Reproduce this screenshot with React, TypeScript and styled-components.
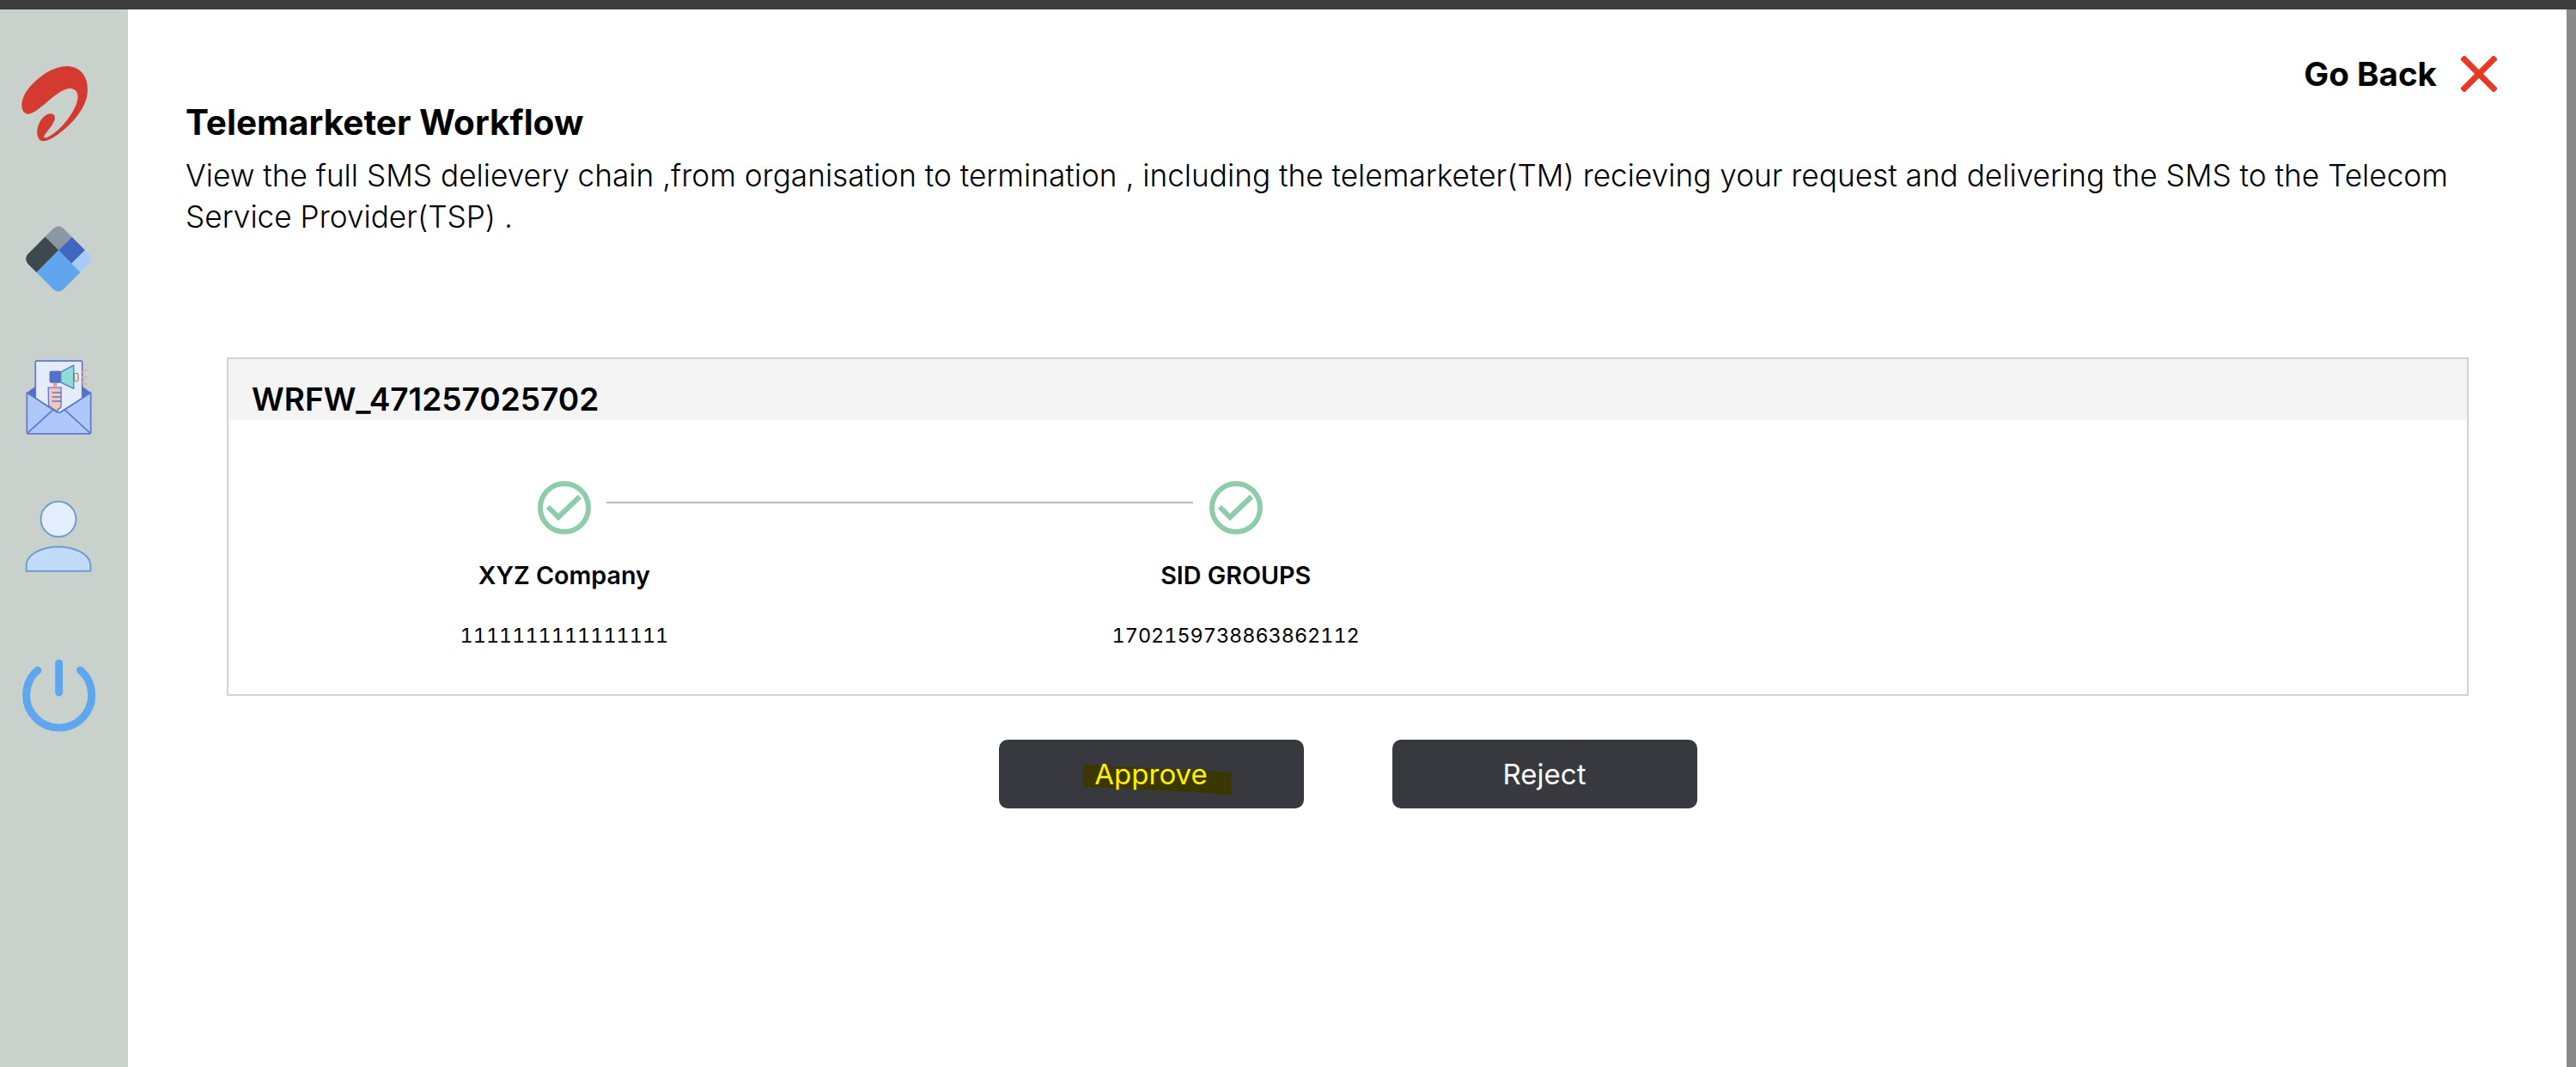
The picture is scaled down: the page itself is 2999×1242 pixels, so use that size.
import React from 'react';
import styled, { createGlobalStyle } from 'styled-components';

const GlobalStyle = createGlobalStyle`
  html, body {
    margin: 0;
    padding: 0;
    background: #ffffff;
    font-family: Inter, "Noto Sans", "Liberation Sans", sans-serif;
    color: #000000;
  }
`;

const AirtelLogo = () => (
  <svg width="87" height="88" viewBox="74 232 261 264">
    <path
      fill="#d43a2f"
      d="M75 365C78 325 115 285 160 255C190 238 225 228 250 234C285 242 305 270 305 315C305 360 275 405 235 443C205 470 175 492 152 494C132 495 124 470 131 445C138 420 155 400 175 398C188 398 195 408 188 424C180 442 165 458 153 475C150 482 156 484 165 480C200 464 250 410 267 360C276 330 268 312 245 310C218 310 190 335 160 360C135 380 115 398 97 399C83 399 74 385 75 365Z"
    />
  </svg>
);

const DiamondLogo = () => (
  <svg width="76" height="77" viewBox="90 790 228 231">
    <defs>
      <clipPath id="diamond-clip">
        <rect x="116.5" y="817.5" width="175" height="175" rx="24" transform="rotate(45 204 905)" />
      </clipPath>
    </defs>
    <g clipPath="url(#diamond-clip)">
      <polygon fill="#8a98a3" points="205,875 100,770 205,700 310,770" />
      <polygon fill="#3e494f" points="205,875 100,770 0,905 70,1010" />
      <polygon fill="#60a6ee" points="205,875 70,1010 205,1100 340,1010" />
      <polygon fill="#4166bf" points="205,875 310,770 345,827 250,921" />
      <polygon fill="#a6cbf7" points="250,921 345,827 400,900 340,1010" />
    </g>
  </svg>
);

const MailIcon = () => (
  <svg width="77" height="88" viewBox="88 206 232 264">
    <path fill="#5470c8" d="M92 320L122 298H286L316 320L204 390Z" />
    <path fill="#e4ecfc" stroke="#5c78d0" strokeWidth="5" strokeLinejoin="round" d="M122 212a3 3 0 0 1 3-3H283a3 3 0 0 1 3 3V340L204 392L122 340Z" />
    <path fill="#aec8f9" stroke="#5c78d0" strokeWidth="5" strokeLinejoin="round" d="M92 320L196 388Q204 392 212 388L316 320V460a4 4 0 0 1-4 4H96a4 4 0 0 1-4-4Z" />
    <path fill="none" stroke="#5c78d0" strokeWidth="5" d="M94 462L184 380M314 462L224 380" />
    <path fill="#f3c8bc" stroke="#5c78d0" strokeWidth="4" d="M167 302H212V365Q212 375 200 378V388L168 365Z" />
    <path fill="none" stroke="#5c78d0" strokeWidth="4" d="M180 320H212M180 335H212M180 350H212" />
    <rect x="184" y="286" width="14" height="16" fill="#e9a68f" />
    <rect x="171" y="244" width="42" height="42" rx="7" fill="#5470c8" />
    <path fill="#8fdcd8" stroke="#5c78d0" strokeWidth="4" strokeLinejoin="round" d="M211 248L256 224V306L211 284Z" />
    <rect x="258" y="252" width="14" height="28" rx="3" fill="#f9e88e" stroke="#5c78d0" strokeWidth="3" />
    <path fill="none" stroke="#f0a79d" strokeWidth="5" strokeLinecap="round" d="M284 248L301 241M284 266H302M284 283L301 291" />
  </svg>
);

const UserIcon = () => (
  <svg width="78" height="85" viewBox="86 696 236 254">
    <circle cx="204" cy="762" r="62" fill="#e3efff" stroke="#6f9bd2" strokeWidth="6" />
    <path fill="#c1dcfb" stroke="#6f9bd2" strokeWidth="6" d="M91 945V920C96 885 145 859 204 859C263 859 312 885 317 920V945Z" />
  </svg>
);

const PowerIcon = () => (
  <svg width="87" height="86" viewBox="73 140 261 260">
    <path
      fill="none"
      stroke="#60a6ee"
      strokeWidth="27"
      strokeLinecap="round"
      d="M129 180A115 115 0 1 0 279 180M204 155V258"
    />
  </svg>
);

const CloseIcon = () => (
  <svg width="42" height="42" viewBox="0 0 42 42">
    <path fill="none" stroke="#e63a26" strokeWidth="7" d="M1.5 1.5L40.5 40.5M40.5 1.5L1.5 40.5" />
  </svg>
);

const CheckCircle = () => (
  <svg width="62" height="62" viewBox="0 0 62 62">
    <circle cx="31" cy="31" r="28" fill="none" stroke="#8fcdaa" strokeWidth="6" />
    <path fill="none" stroke="#8fcdaa" strokeWidth="6" d="M12 30L24 42L49 18" />
  </svg>
);

const steps = [
  { name: 'XYZ Company', code: '1111111111111111' },
  { name: 'SID GROUPS', code: '1702159738863862112' },
];

const App = () => {
  return (
    <StyledRoot>
      <GlobalStyle />
      <StyledTopBar />
      <StyledShell>
        <StyledSidebar>
          <StyledNavItem $gap={66}><AirtelLogo /></StyledNavItem>
          <StyledNavItem $gap={98}><DiamondLogo /></StyledNavItem>
          <StyledNavItem $gap={79}><MailIcon /></StyledNavItem>
          <StyledNavItem $gap={75}><UserIcon /></StyledNavItem>
          <StyledNavItem $gap={100}><PowerIcon /></StyledNavItem>
        </StyledSidebar>
        <StyledMain>
          <StyledBackRow>
            <StyledBackText>Go Back</StyledBackText>
            <CloseIcon />
          </StyledBackRow>
          <StyledTitle>Telemarketer Workflow</StyledTitle>
          <StyledDescription>
            View the full SMS delievery chain ,from organisation to termination , including the telemarketer(TM) recieving your request and delivering the SMS to the Telecom Service Provider(TSP) .
          </StyledDescription>
          <StyledCard>
            <StyledCardHeader>WRFW_471257025702</StyledCardHeader>
            <StyledStepper>
              {steps.map((step, index) => (
                <StyledStep key={step.code} $connected={index > 0}>
                  <CheckCircle />
                  <StyledStepName>{step.name}</StyledStepName>
                  <StyledStepCode>{step.code}</StyledStepCode>
                </StyledStep>
              ))}
            </StyledStepper>
          </StyledCard>
          <StyledActions>
            <StyledButton $highlighted>
              <StyledMarker />
              <StyledButtonLabel>Approve</StyledButtonLabel>
            </StyledButton>
            <StyledButton>
              <StyledButtonLabel>Reject</StyledButtonLabel>
            </StyledButton>
          </StyledActions>
        </StyledMain>
        <StyledScrollbar />
      </StyledShell>
    </StyledRoot>
  );
};

const StyledRoot = styled.div`
  display: flex;
  flex-direction: column;
  width: 2999px;
  height: 1242px;
  overflow: hidden;
`;
const StyledTopBar = styled.div`
  flex: none;
  height: 11px;
  background: #3c3c3c;
`;
const StyledShell = styled.div`
  flex: 1;
  display: flex;
  min-height: 0;
`;
const StyledSidebar = styled.nav`
  flex: none;
  display: flex;
  flex-direction: column;
  align-items: center;
  box-sizing: border-box;
  width: 149px;
  padding-right: 13px;
  background: #c9d1cc;
`;
const StyledNavItem = styled.div<{ $gap: number }>`
  display: flex;
  margin-top: ${({ $gap }) => $gap}px;
`;
const StyledMain = styled.main`
  flex: 1;
  min-width: 0;
  padding: 54px 81px 0 67px;
`;
const StyledScrollbar = styled.div`
  flex: none;
  width: 11px;
  background: #8a8a8a;
`;
const StyledBackRow = styled.div`
  display: flex;
  justify-content: flex-end;
  align-items: center;
  gap: 28px;
  height: 42px;
`;
const StyledBackText = styled.span`
  font-size: 38.6px;
  font-weight: 700;
  line-height: 42px;
`;
const StyledTitle = styled.h1`
  margin: 13px 0 0;
  font-size: 40.5px;
  font-weight: 700;
  line-height: 46px;
`;
const StyledDescription = styled.p`
  margin: 14px 0 0;
  font-size: 35.2px;
  font-weight: 300;
  line-height: 48px;
`;
const StyledCard = styled.section`
  box-sizing: border-box;
  height: 394px;
  margin: 140px 33px 0 48px;
  border: 2px solid #d3d3d3;
`;
const StyledCardHeader = styled.div`
  box-sizing: border-box;
  height: 71px;
  padding: 22px 0 0 27px;
  background: #f4f4f4;
  font-size: 37px;
  font-weight: 600;
  line-height: 49px;
`;
const StyledStepper = styled.div`
  display: flex;
  padding-top: 71px;
`;
const StyledStep = styled.div<{ $connected?: boolean }>`
  position: relative;
  display: flex;
  flex-direction: column;
  align-items: center;
  width: 30%;

  &::before {
    content: '';
    display: ${({ $connected }) => ($connected ? 'block' : 'none')};
    position: absolute;
    top: 24px;
    left: -342px;
    width: 683px;
    height: 2px;
    background: #bbbbbb;
  }
`;
const StyledStepName = styled.div`
  margin-top: 29px;
  font-size: 28.7px;
  font-weight: 600;
  line-height: 38px;
`;
const StyledStepCode = styled.div`
  margin-top: 32px;
  font-size: 23.4px;
  font-weight: 400;
  line-height: 38px;
  font-variant-numeric: tabular-nums;
`;
const StyledActions = styled.div`
  display: flex;
  justify-content: center;
  gap: 103px;
  margin: 51px 33px 0 48px;
`;
const StyledButton = styled.button<{ $highlighted?: boolean }>`
  position: relative;
  width: 355px;
  height: 80px;
  padding: 0;
  border: none;
  border-radius: 10px;
  background: #38393e;
  color: ${({ $highlighted }) => ($highlighted ? '#ffef00' : '#ffffff')};
  font-family: inherit;
  font-size: 33px;
  font-weight: 400;
`;
const StyledButtonLabel = styled.span`
  position: relative;
`;
// hand drawn highlighter mark over the label
const StyledMarker = styled.span`
  position: absolute;
  left: 98px;
  top: 29px;
  width: 173px;
  height: 35px;
  background: #3b3700;
  clip-path: polygon(0 0, 60% 16%, 100% 26%, 100% 100%, 60% 88%, 0 74%);
`;

export default App;
